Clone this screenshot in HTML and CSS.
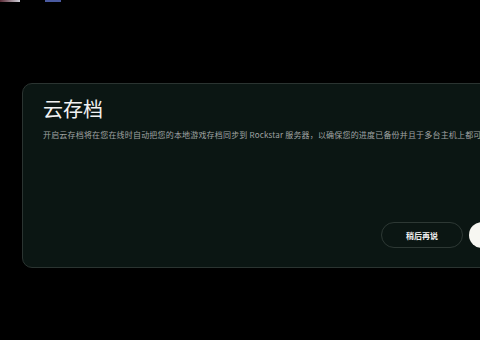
FILE: index.html
```html
<!DOCTYPE html>
<html lang="zh">
<head>
<meta charset="utf-8">
<link rel="stylesheet" href="styles.css">
</head>
<body>
<div class="topline"><span class="seg red"></span><span class="seg blue"></span></div>
<section class="card">
  <h1 class="title">云存档</h1>
  <p class="desc">开启云存档将在您在线时自动把您的本地游戏存档同步到 Rockstar 服务器，以确保您的进度已备份并且于多台主机上都可用。</p>
  <div class="actions">
    <button class="btn btn-outline">稍后再说</button>
    <button class="btn btn-solid">开启</button>
  </div>
</section>
</body>
</html>
```
FILE: styles.css
```css
html, body {
  margin: 0;
  padding: 0;
  background: #000;
  width: 480px;
  height: 340px;
  overflow: hidden;
  font-family: "Noto Sans CJK SC", "Noto Sans", sans-serif;
}
.topline {
  display: flex;
  height: 2px;
  gap: 25px;
}
.seg { display: block; height: 2px; }
.seg.red { width: 20px; background: linear-gradient(90deg, #5a2a35, #cfcfd8); }
.seg.blue { width: 16px; background: #4a5aa0; }
.card {
  margin: 81px 0 0 22px;
  width: 540px;
  height: 185px;
  box-sizing: border-box;
  background: #0b1613;
  border: 1px solid #2b3431;
  border-radius: 10px;
  padding: 11px 0 0 20px;
  display: flex;
  flex-direction: column;
}
.title {
  margin: 0;
  font-size: 20px;
  font-weight: 400;
  color: #f2f2f2;
  line-height: 28px;
}
.desc {
  margin: 6px 0 0 0;
  font-size: 8px;
  letter-spacing: 0.18px;
  line-height: 12px;
  color: #a0a4a3;
  white-space: nowrap;
}
.actions {
  margin-top: 81px;
  margin-left: 338px;
  display: flex;
  gap: 6px;
}
.btn {
  height: 26px;
  border-radius: 13px;
  font-family: inherit;
  font-size: 8px;
  font-weight: 700;
  padding: 0;
}
.btn-outline {
  width: 82px;
  background: transparent;
  border: 1px solid #2d3834;
  color: #f0f0f0;
}
.btn-solid {
  width: 82px;
  background: #f7f7f2;
  border: none;
  color: #111;
}
```
